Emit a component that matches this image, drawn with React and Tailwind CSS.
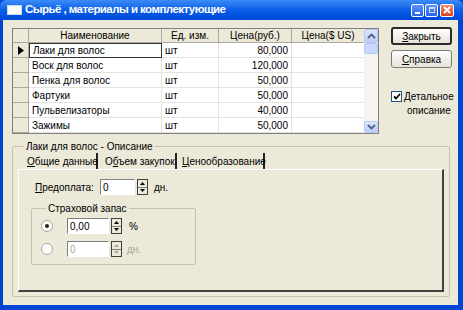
import React from 'react';

const rows = [
  ['Лаки для волос', 'шт', '80,000'],
  ['Воск для волос', 'шт', '120,000'],
  ['Пенка для волос', 'шт', '50,000'],
  ['Фартуки', 'шт', '50,000'],
  ['Пульвелизаторы', 'шт', '40,000'],
  ['Зажимы', 'шт', '50,000'],
];

const Chevron = ({ down }) => (
  <svg width="9" height="6" viewBox="0 0 9 6" className={down ? 'rotate-180' : ''}>
    <path d="M1 5 L4.5 1.5 L8 5" fill="none" stroke="#4d6185" strokeWidth="1.8" />
  </svg>
);

const Spin = ({ disabled }) => {
  const c = disabled ? '#aca899' : '#000';
  return (
    <div className="w-[11px] h-[16px] flex flex-col border border-[#404040] bg-[#ece9d8]">
      <div className="flex-1 flex items-center justify-center border-b border-[#808080]">
        <svg width="5" height="3" viewBox="0 0 5 3"><path d="M0 3 L2.5 0 L5 3Z" fill={c} /></svg>
      </div>
      <div className="flex-1 flex items-center justify-center">
        <svg width="5" height="3" viewBox="0 0 5 3"><path d="M0 0 L2.5 3 L5 0Z" fill={c} /></svg>
      </div>
    </div>
  );
};

const Edit = ({ value, w, disabled }) => (
  <div
    className={`h-[16px] ${w} border-t border-l border-[#808080] border-r border-b border-r-white border-b-white bg-white flex items-center pl-[2px] ${disabled ? 'text-[#aca899]' : 'text-black'}`}
  >
    {value}
  </div>
);

const Radio = ({ checked }) => (
  <div className="w-[12px] h-[12px] rounded-full border border-[#aca899] bg-white flex items-center justify-center">
    {checked && <div className="w-[4px] h-[4px] rounded-full bg-[#222]" />}
  </div>
);

const Button = ({ children, primary }) => (
  <div
    className={`w-[61px] h-[18px] flex items-center justify-center rounded-[3px] bg-gradient-to-b from-white to-[#e6e3d6] ${primary ? 'border-2 border-[#2a2a2a]' : 'border border-[#7a7a7a]'}`}
  >
    {children}
  </div>
);

const Caption = ({ children, ml }) => (
  <div className={`-mt-[7px] ${ml} px-[2px] w-fit h-[13px] shrink-0 leading-[13px] bg-[#ece9d8] whitespace-nowrap`}>{children}</div>
);

export default function App() {
  return (
    <div className="w-[463px] h-[310px] bg-[#0046d5] flex flex-col overflow-hidden font-['Liberation_Sans',Arial,sans-serif] text-[10px] text-black">
      {/* title bar */}
      <div className="h-[20px] shrink-0 bg-gradient-to-b from-[#3b8cf6] via-[#0a5ee8] to-[#0048d8] flex items-center pl-[7px] pr-[9px] rounded-t-[6px]">
        <div className="w-[15px] h-[10px] bg-white border border-[#c8d8f8]" />
        <div className="ml-[3px] text-white font-bold text-[11.5px] tracking-[-0.55px]">Сырьё , материалы и комплектующие</div>
        <div className="flex-1" />
        <div className="flex gap-[1px]">
          <div className="w-[13px] h-[13px] rounded-[2px] border border-white bg-gradient-to-b from-[#5d93f8] to-[#2962e8] flex items-end justify-center pb-[2px]">
            <div className="w-[5px] h-[2px] bg-white" />
          </div>
          <div className="w-[13px] h-[13px] rounded-[2px] border border-white bg-gradient-to-b from-[#5d93f8] to-[#2962e8] flex items-center justify-center">
            <div className="w-[6px] h-[6px] border border-[#c8d8ff] border-t-2" />
          </div>
          <div className="ml-[1px] w-[14px] h-[13px] rounded-[2px] border border-white bg-gradient-to-b from-[#f08a6a] to-[#d8401c] flex items-center justify-center">
            <svg width="8" height="8" viewBox="0 0 8 8"><path d="M1 1 L7 7 M7 1 L1 7" stroke="white" strokeWidth="1.8" /></svg>
          </div>
        </div>
      </div>

      {/* client */}
      <div className="flex-1 ml-[3px] mr-[5px] mb-[5px] bg-[#ece9d8] flex flex-col pt-[8px] pl-[9px] pb-[8px]">
        <div className="flex h-[106px] shrink-0">
          {/* grid */}
          <div className="w-[367px] h-[106px] border border-[#808080] bg-white flex">
            <div className="w-[351px] flex flex-col">
              <div className="h-[14px] flex bg-[#ece9d8]">
                <div className="w-[16px] border-r border-b border-[#aca899]" />
                <div className="w-[133px] border-r border-b border-[#aca899] flex items-center justify-center">Наименование</div>
                <div className="w-[57px] border-r border-b border-[#aca899] flex items-center justify-center">Ед. изм.</div>
                <div className="w-[73px] border-r border-b border-[#aca899] flex items-center justify-center">Цена(руб.)</div>
                <div className="w-[72px] border-b border-[#aca899] flex items-center justify-center">Цена($ US)</div>
              </div>
              {rows.map((r, i) => (
                <div key={i} className="h-[15px] flex">
                  <div className="w-[16px] bg-[#ece9d8] border-r border-b border-[#aca899] flex items-center justify-center">
                    {i === 0 && (
                      <svg width="6" height="9" viewBox="0 0 6 9"><path d="M0 0 L6 4.5 L0 9Z" fill="#000" /></svg>
                    )}
                  </div>
                  <div className={`w-[133px] flex items-center pl-[3px] ${i === 0 ? 'border border-[#333]' : 'border-r border-b border-[#e4e2da]'}`}>{r[0]}</div>
                  <div className="w-[57px] flex items-center pl-[3px] border-r border-b border-[#e4e2da]">{r[1]}</div>
                  <div className="w-[73px] flex items-center justify-end pr-[3px] border-r border-b border-[#e4e2da]">{r[2]}</div>
                  <div className="w-[72px] border-b border-[#e4e2da]" />
                </div>
              ))}
            </div>
            {/* scrollbar */}
            <div className="w-[14px] bg-[#f5f4ef] flex flex-col">
              <div className="h-[14px] rounded-[2px] bg-gradient-to-b from-[#dbe5fd] to-[#bccdf7] border border-[#b5c8f2] flex items-center justify-center">
                <Chevron />
              </div>
              <div className="h-[11px] rounded-[2px] bg-[#c9d8fc] border border-[#b5c8f2]" />
              <div className="flex-1" />
              <div className="h-[12px] rounded-[2px] bg-gradient-to-b from-[#dbe5fd] to-[#bccdf7] border border-[#b5c8f2] flex items-center justify-center">
                <Chevron down />
              </div>
            </div>
          </div>

          {/* right column */}
          <div className="ml-[12px] flex flex-col -mt-[1px]">
            <Button primary>
              <span><span className="underline">З</span>акрыть</span>
            </Button>
            <div className="h-[5px]" />
            <Button>
              <span><span className="underline">С</span>правка</span>
            </Button>
            <div className="mt-[22px] flex items-start">
              <div className="w-[11px] h-[11px] border border-[#1c5180] bg-white flex items-center justify-center mt-[1px]">
                <svg width="8" height="7" viewBox="0 0 8 7"><path d="M1 3.5 L3 5.5 L7 1" fill="none" stroke="#000" strokeWidth="1.8" /></svg>
              </div>
              <div className="ml-[2px] leading-[14px] text-center">
                <div><span className="underline">Д</span>етальное</div>
                <div>описание</div>
              </div>
            </div>
          </div>
        </div>

        {/* description group */}
        <div className="mt-[12px] w-[438px] flex-1 border border-[#c5c2b2] rounded-[2px] pl-[5px] pr-[5px] pb-[4px] flex flex-col">
          <Caption ml="ml-[6px]">Лаки для волос - Описание</Caption>
          <div className="h-[16px] shrink-0 flex items-stretch pl-[2px]">
            <div className="w-[78px] pl-[7px] border-r-2 border-[#222] flex items-center whitespace-nowrap">
              <span><span className="underline">О</span>бщие данные</span>
            </div>
            <div className="w-[79px] pl-[7px] border-r-2 border-[#222] flex items-center whitespace-nowrap">
              <span>О<span className="underline">б</span>ъем закупок</span>
            </div>
            <div className="w-[88px] pl-[5px] border-r-2 border-[#222] flex items-center whitespace-nowrap">
              <span><span className="underline">Ц</span>енообразование</span>
            </div>
          </div>
          <div className="flex-1 border-t border-l border-white border-r-2 border-b-2 border-r-[#404040] border-b-[#404040] pl-[12px] pt-[9px]">
            <div className="flex items-center">
              <div className="w-[69px] pl-[4px]"><span className="underline">П</span>редоплата:</div>
              <Edit value="0" w="w-[35px]" />
              <div className="ml-[2px]"><Spin /></div>
              <div className="ml-[6px]">дн.</div>
            </div>
            <div className="mt-[13px] w-[165px] h-[57px] border border-[#c5c2b2] rounded-[2px] pl-[9px]">
              <Caption ml="ml-[5px]">Страховой запас</Caption>
              <div className="flex items-center mt-[3px]">
                <Radio checked />
                <div className="ml-[14px]"><Edit value="0,00" w="w-[42px]" /></div>
                <div className="ml-[2px]"><Spin /></div>
                <div className="ml-[7px]">%</div>
              </div>
              <div className="flex items-center mt-[7px]">
                <Radio />
                <div className="ml-[14px]"><Edit value="0" w="w-[42px]" disabled /></div>
                <div className="ml-[2px]"><Spin disabled /></div>
                <div className="ml-[5px] text-[#aca899]">дн.</div>
              </div>
            </div>
          </div>
        </div>
      </div>
    </div>
  );
}
